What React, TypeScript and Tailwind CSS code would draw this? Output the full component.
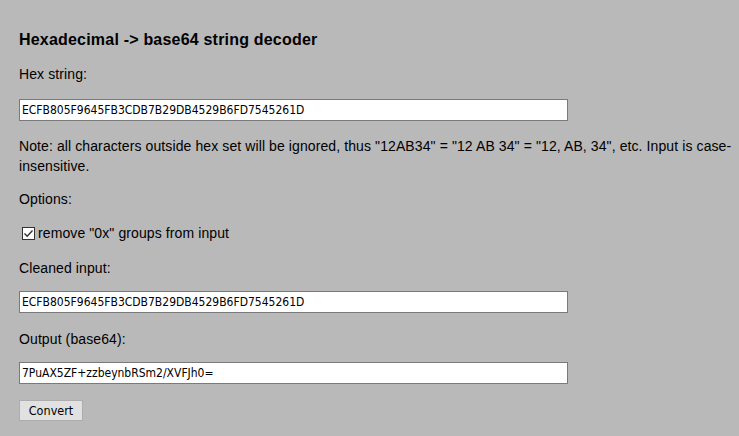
import React from 'react';

const HEX = 'ECFB805F9645FB3CDB7B29DB4529B6FD7545261D';

const tahomaLike = { fontFamily: '"DejaVu Sans Condensed", "DejaVu Sans", sans-serif' };

function Field({ value }: { value: string }) {
  return (
    <input
      readOnly
      value={value}
      className="block w-[549px] h-[22px] bg-white border border-[#7a7a7a] px-[2px] text-[12px] tracking-normal text-black outline-none"
      style={tahomaLike}
    />
  );
}

export default function App() {
  return (
    <div
      className="min-h-[436px] bg-[#b9b9b9] pl-[19px] pr-[2px] pt-[30px] pb-[15px] text-[14px] leading-[20px] tracking-[0.1px] text-black"
      style={{ fontFamily: '"Liberation Sans", Arial, sans-serif' }}
    >
      <h1 className="text-[16px] font-bold leading-[20px] tracking-[0.2px]">Hexadecimal -&gt; base64 string decoder</h1>

      <p className="mt-[14px]">Hex string:</p>
      <div className="mt-[15px]">
        <Field value={HEX} />
      </div>

      <p className="mt-[15px]">
        Note: all characters outside hex set will be ignored, thus "12AB34" = "12 AB 34" = "12, AB, 34", etc. Input is case-insensitive.
      </p>

      <p className="mt-[13px]">Options:</p>

      <label className="mt-[14px] flex items-center h-[20px] pl-[3px]">
        <span className="w-[13px] h-[13px] bg-white border border-[#333] flex items-center justify-center">
          <svg width="11" height="11" viewBox="0 0 11 11">
            <path d="M1.5 5.5 L4.2 8.2 L9.5 2.5" fill="none" stroke="#333" strokeWidth="1.4" />
          </svg>
        </span>
        <span className="ml-[3px]">remove "0x" groups from input</span>
      </label>

      <p className="mt-[15px]">Cleaned input:</p>
      <div className="mt-[13px]">
        <Field value={HEX} />
      </div>

      <p className="mt-[16px]">Output (base64):</p>
      <div className="mt-[13px]">
        <Field value="7PuAX5ZF+zzbeynbRSm2/XVFJh0=" />
      </div>

      <button
        className="mt-[16px] block w-[64px] h-[21px] bg-[#e1e1e1] border border-[#adadad] text-[12.5px] leading-[19px] tracking-normal text-black"
        style={tahomaLike}
      >
        Convert
      </button>
    </div>
  );
}
